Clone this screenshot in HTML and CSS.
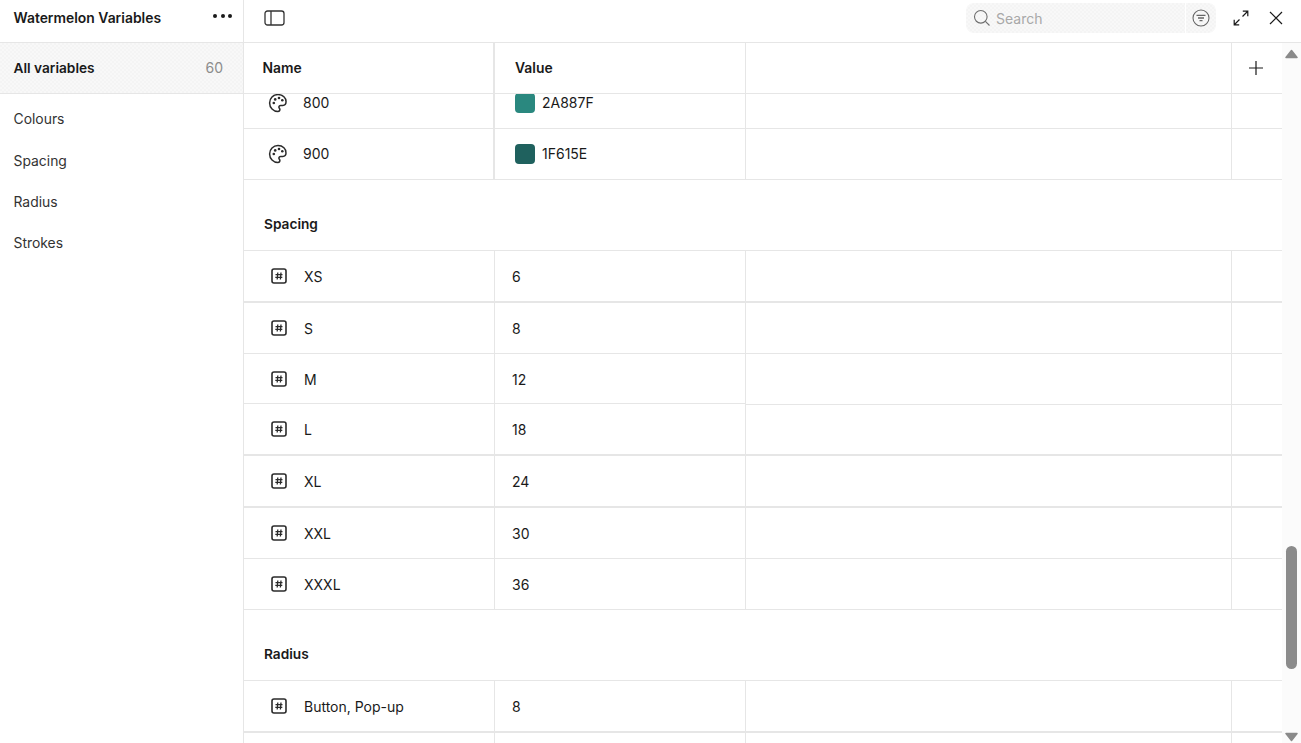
FILE: index.html
```html
<!DOCTYPE html>
<html lang="en">
<head>
<meta charset="utf-8">
<title>Watermelon Variables</title>
<link rel="stylesheet" href="styles.css">
</head>
<body>
<svg class="defs" width="0" height="0" aria-hidden="true">
  <symbol id="palette" viewBox="0 0 20 20">
    <path d="M10 1.600c-4.800 0-8.400 3.700-8.400 8.300 0 4.700 3.700 8.500 8.300 8.500 1.200 0 2-.8 2-1.800 0-.5-.2-.9-.5-1.200-.3-.4-.5-.7-.5-1.200 0-1 .8-1.800 1.800-1.800h2.100c2.100 0 3.200-1.400 3.200-3.300C18.400 5 14.700 1.600 10 1.600Z" fill="none" stroke="currentColor" stroke-width="1.500" stroke-linejoin="round"/>
    <circle cx="5.800" cy="10" r="1.300" fill="currentColor"/>
    <circle cx="7.200" cy="6.400" r="1.300" fill="currentColor"/>
    <circle cx="11" cy="5" r="1.300" fill="currentColor"/>
    <circle cx="14.300" cy="7.300" r="1.300" fill="currentColor"/>
  </symbol>
  <symbol id="hash" viewBox="0 0 16 16">
    <rect x="1" y="1" width="14" height="14" rx="2" fill="none" stroke="currentColor" stroke-width="1.600"/>
    <path d="M6.800 4.500 6.200 11.500M10 4.500 9.400 11.500M4.500 6.700h7M4.300 9.300h7" fill="none" stroke="currentColor" stroke-width="1.300"/>
  </symbol>
</svg>
<div class="app">
  <aside class="sidebar">
    <div class="brand">
      <span class="brand-name">Watermelon Variables</span>
      <span class="dots"><i></i><i></i><i></i></span>
    </div>
    <div class="all-row"><span>All variables</span><span class="count">60</span></div>
    <nav class="nav">
      <a>Colours</a>
      <a>Spacing</a>
      <a>Radius</a>
      <a>Strokes</a>
    </nav>
  </aside>
  <main class="main">
    <header class="topbar">
      <svg class="panel-icon" width="22" height="16" viewBox="0 0 22 16"><rect x="1" y="1" width="19" height="14" rx="2.500" fill="none" stroke="currentColor" stroke-width="1.300"/><path d="M7 1V15" stroke="currentColor" stroke-width="1.300"/></svg>
      <div class="top-right">
        <div class="search">
          <div class="search-field">
            <svg width="18" height="18" viewBox="0 0 18 18"><circle cx="7.800" cy="7.800" r="6.300" fill="none" stroke="#6f6f6f" stroke-width="1.100"/><path d="M12.400 12.400 16.500 16.500" stroke="#6f6f6f" stroke-width="1.100"/></svg>
            <span>Search</span>
          </div>
          <div class="search-filter">
            <svg width="18" height="18" viewBox="0 0 18 18"><circle cx="9" cy="9" r="8" fill="none" stroke="#666" stroke-width="1.100"/><path d="M4.500 6.300h9M6 9h6M7.500 11.700h3" stroke="#666" stroke-width="1.300"/></svg>
          </div>
        </div>
        <svg class="expand" width="16" height="16" viewBox="0 0 16 16"><path d="M9.800 1.200h5v5M15 1 9.500 6.500M6.200 14.800h-5v-5M1 15l5.500-5.500" fill="none" stroke="#1a1a1a" stroke-width="1.200"/></svg>
        <svg class="close" width="14" height="14" viewBox="0 0 14 14"><path d="M1 1l12 12M13 1 1 13" stroke="#1a1a1a" stroke-width="1.200"/></svg>
      </div>
    </header>
    <div class="content">
      <div class="table">
        <div class="row head">
          <div class="cell c-name head-divider"><b>Name</b></div>
          <div class="cell c-value"><b>Value</b></div>
          <div class="cell c-fill"></div>
          <div class="cell c-add">
            <svg width="14" height="14" viewBox="0 0 14 14"><path d="M7 0v14M0 7h14" stroke="#1a1a1a" stroke-width="1.200"/></svg>
          </div>
        </div>
        <div class="body">
          <div class="row first">
            <div class="cell c-name head-divider pal-cell"><svg class="ico pal"><use href="#palette"/></svg><span>800</span></div>
            <div class="cell c-value pal-value"><i class="swatch teal8"></i><span>2A887F</span></div>
            <div class="cell c-fill"></div><div class="cell c-add"></div>
          </div>
          <div class="row">
            <div class="cell c-name head-divider pal-cell"><svg class="ico pal"><use href="#palette"/></svg><span>900</span></div>
            <div class="cell c-value pal-value"><i class="swatch teal9"></i><span>1F615E</span></div>
            <div class="cell c-fill"></div><div class="cell c-add"></div>
          </div>
          <div class="section">Spacing</div>
          <div class="row thick">
            <div class="cell c-name"><svg class="ico"><use href="#hash"/></svg><span>XS</span></div>
            <div class="cell c-value">6</div><div class="cell c-fill"></div><div class="cell c-add"></div>
          </div>
          <div class="row">
            <div class="cell c-name"><svg class="ico"><use href="#hash"/></svg><span>S</span></div>
            <div class="cell c-value">8</div><div class="cell c-fill"></div><div class="cell c-add"></div>
          </div>
          <div class="row short">
            <div class="cell c-name"><svg class="ico"><use href="#hash"/></svg><span>M</span></div>
            <div class="cell c-value">12</div><div class="cell c-fill"></div><div class="cell c-add"></div>
          </div>
          <div class="row thick after-short">
            <div class="cell c-name"><svg class="ico"><use href="#hash"/></svg><span>L</span></div>
            <div class="cell c-value">18</div><div class="cell c-fill"></div><div class="cell c-add"></div>
          </div>
          <div class="row thick">
            <div class="cell c-name"><svg class="ico"><use href="#hash"/></svg><span>XL</span></div>
            <div class="cell c-value">24</div><div class="cell c-fill"></div><div class="cell c-add"></div>
          </div>
          <div class="row">
            <div class="cell c-name"><svg class="ico"><use href="#hash"/></svg><span>XXL</span></div>
            <div class="cell c-value">30</div><div class="cell c-fill"></div><div class="cell c-add"></div>
          </div>
          <div class="row">
            <div class="cell c-name"><svg class="ico"><use href="#hash"/></svg><span>XXXL</span></div>
            <div class="cell c-value">36</div><div class="cell c-fill"></div><div class="cell c-add"></div>
          </div>
          <div class="section">Radius</div>
          <div class="row thick">
            <div class="cell c-name"><svg class="ico"><use href="#hash"/></svg><span>Button, Pop-up</span></div>
            <div class="cell c-value">8</div><div class="cell c-fill"></div><div class="cell c-add"></div>
          </div>
          <div class="row">
            <div class="cell c-name"></div><div class="cell c-value"></div><div class="cell c-fill"></div><div class="cell c-add"></div>
          </div>
        </div>
      </div>
      <div class="scrollbar">
        <svg class="arrow" width="13" height="10" viewBox="0 0 13 10"><path d="M6.500 1.500 12 8.500H1Z" fill="#8a8a8a" stroke="#8a8a8a" stroke-width="1.500" stroke-linejoin="round"/></svg>
        <i class="thumb"></i>
        <svg class="arrow down" width="13" height="10" viewBox="0 0 13 10"><path d="M1 1.500H12L6.500 8.500Z" fill="#8a8a8a" stroke="#8a8a8a" stroke-width="1.500" stroke-linejoin="round"/></svg>
      </div>
    </div>
  </main>
</div>
</body>
</html>
```

FILE: styles.css
```css
* { box-sizing: border-box; }
html, body { margin: 0; height: 100%; }
body {
  font-family: Inter, "Liberation Sans", sans-serif;
  font-size: 14px;
  color: #1a1a1a;
  background: #fff;
  overflow: hidden;
}
.defs { display: block; height: 0; }
.app { display: flex; width: 1301px; height: 743px; overflow: hidden; }

.sidebar { flex: 0 0 244px; border-right: 1px solid #e6e6e6; }
.brand {
  height: 43px;
  display: flex;
  align-items: center;
  justify-content: space-between;
  padding: 0 11px 7px 13.500px;
  border-bottom: 1px solid #e6e6e6;
}
.brand-name { font-weight: 600; font-size: 13.900px; color: #1a1a1a; }
.dots { display: flex; gap: 3.500px; margin-top: -3px; }
.dots i { width: 4px; height: 4px; border-radius: 50%; background: #1a1a1a; }
.all-row {
  height: 51px;
  display: flex;
  align-items: center;
  justify-content: space-between;
  padding: 0 20px 1px 13.500px;
  background: repeating-conic-gradient(#f4f4f4 0 25%, #f8f8f8 0 50%) 0 0 / 4px 4px;
  border-bottom: 1px solid #e6e6e6;
  font-weight: 600;
  font-size: 13.700px;
}
.count { font-weight: 400; color: #8c8c8c; font-size: 14px; }
.nav { display: flex; flex-direction: column; padding-top: 4.700px; font-size: 13.900px; }
.nav a { height: 41.300px; display: flex; align-items: center; padding-left: 13.500px; color: #333; }

.main { flex: 1; min-width: 0; display: flex; flex-direction: column; }
.topbar {
  flex: 0 0 43px;
  display: flex;
  align-items: center;
  justify-content: space-between;
  padding: 0 18px 6px 20px;
  border-bottom: 1px solid #e6e6e6;
}
.panel-icon { color: #333; }
.top-right { display: flex; align-items: center; }
.search {
  width: 250px;
  height: 30px;
  display: flex;
  border-radius: 8px;
  overflow: hidden;
  gap: 1px;
}
.search-field {
  flex: 1;
  display: flex;
  align-items: center;
  gap: 5px;
  padding-left: 7px;
  background: repeating-conic-gradient(#f4f4f4 0 25%, #f8f8f8 0 50%) 0 0 / 4px 4px;
  color: #a8a8a8;
}
.search-filter {
  width: 30px;
  display: flex;
  align-items: center;
  justify-content: center;
  background: repeating-conic-gradient(#f4f4f4 0 25%, #f8f8f8 0 50%) 0 0 / 4px 4px;
}
.expand { margin-left: 17px; }
.close { margin-left: 20px; }

.content { flex: 1; min-height: 0; display: flex; }
.table { flex: 1; min-width: 0; display: flex; flex-direction: column; }
.body { flex: 1; min-height: 0; overflow: hidden; }

.row { display: flex; height: 51px; border-bottom: 1px solid #e6e6e6; }
.row.head { flex: 0 0 51px; position: relative; z-index: 1; background: #fff; }
.row.first { margin-top: -16px; }
.row.thick { height: 52px; border-bottom-width: 2px; }
.row.short { height: 50px; border-bottom: 0; }
.row.short .cell { padding-top: 1px; }
.row.short .c-name, .row.short .c-value { border-bottom: 1px solid #e6e6e6; }
.row.after-short .c-fill, .row.after-short .c-add { border-top: 1px solid #e6e6e6; }

.cell { display: flex; align-items: center; border-right: 1px solid #e6e6e6; }
.c-name { flex: 0 0 251px; padding-left: 27px; gap: 17px; }
.pal-cell { padding-left: 25px; gap: 16px; padding-bottom: 1px; }
.c-value { flex: 0 0 251px; padding-left: 17px; gap: 7px; }
.pal-value { padding-bottom: 1px; }
.c-fill { flex: 0 0 486px; }
.c-add { flex: 1; border-right: 0; justify-content: center; padding-right: 2px; }
.head-divider { border-right-width: 2px; }
.head .cell { padding-bottom: 1px; }
.head .c-name { padding-left: 18.500px; }
.head .c-value { padding-left: 20px; }
.head b { font-weight: 600; font-size: 13.900px; }

.ico { width: 16px; height: 16px; color: #2b2b2b; flex: none; }
.ico.pal { width: 20px; height: 20px; margin-left: -1px; margin-right: -1px; }
.swatch { width: 20px; height: 20px; border-radius: 4px; margin-left: 3px; }
.teal8 { background: #2a887f; }
.teal9 { background: #1f615e; }

.section {
  height: 71px;
  display: flex;
  align-items: center;
  padding: 17px 0 0 20px;
  font-weight: 600;
  font-size: 13.700px;
  border-bottom: 1px solid #e6e6e6;
}

.scrollbar {
  flex: 0 0 19px;
  background: #fbfbfb;
  display: flex;
  flex-direction: column;
  align-items: center;
  padding-top: 6px;
}
.arrow { flex: none; }
.arrow.down { margin-top: 63px; }
.thumb { flex: none; width: 11px; height: 123px; margin-top: 487px; border-radius: 6px; background: #8b8b8b; }
```
